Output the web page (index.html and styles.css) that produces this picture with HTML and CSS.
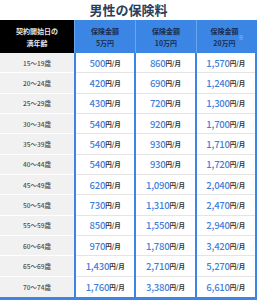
FILE: index.html
```html
<!DOCTYPE html>
<html lang="ja">
<head>
<meta charset="utf-8">
<link rel="stylesheet" href="styles.css">
</head>
<body>
<div class="page">
  <h1 class="title">男性の保険料</h1>
  <div class="table">
    <div class="head">
      <div class="hcell hleft">契約開始日の<br>満年齢</div>
      <div class="hcell">保険金額<br>5万円</div>
      <div class="hcell">保険金額<br>10万円</div>
      <div class="hcell">保険金額<br>20万円<sup class="note">※</sup></div>
    </div>
    <div class="body">
      <div class="row"><div class="age">15～19歳</div><div class="amt"><b>500</b>円/月</div><div class="amt"><b>860</b>円/月</div><div class="amt"><b>1,570</b>円/月</div></div>
      <div class="row"><div class="age">20～24歳</div><div class="amt"><b>420</b>円/月</div><div class="amt"><b>690</b>円/月</div><div class="amt"><b>1,240</b>円/月</div></div>
      <div class="row"><div class="age">25～29歳</div><div class="amt"><b>430</b>円/月</div><div class="amt"><b>720</b>円/月</div><div class="amt"><b>1,300</b>円/月</div></div>
      <div class="row"><div class="age">30～34歳</div><div class="amt"><b>540</b>円/月</div><div class="amt"><b>920</b>円/月</div><div class="amt"><b>1,700</b>円/月</div></div>
      <div class="row"><div class="age">35～39歳</div><div class="amt"><b>540</b>円/月</div><div class="amt"><b>930</b>円/月</div><div class="amt"><b>1,710</b>円/月</div></div>
      <div class="row"><div class="age">40～44歳</div><div class="amt"><b>540</b>円/月</div><div class="amt"><b>930</b>円/月</div><div class="amt"><b>1,720</b>円/月</div></div>
      <div class="row"><div class="age">45～49歳</div><div class="amt"><b>620</b>円/月</div><div class="amt"><b>1,090</b>円/月</div><div class="amt"><b>2,040</b>円/月</div></div>
      <div class="row"><div class="age">50～54歳</div><div class="amt"><b>730</b>円/月</div><div class="amt"><b>1,310</b>円/月</div><div class="amt"><b>2,470</b>円/月</div></div>
      <div class="row"><div class="age">55～59歳</div><div class="amt"><b>850</b>円/月</div><div class="amt"><b>1,550</b>円/月</div><div class="amt"><b>2,940</b>円/月</div></div>
      <div class="row"><div class="age">60～64歳</div><div class="amt"><b>970</b>円/月</div><div class="amt"><b>1,780</b>円/月</div><div class="amt"><b>3,420</b>円/月</div></div>
      <div class="row"><div class="age">65～69歳</div><div class="amt"><b>1,430</b>円/月</div><div class="amt"><b>2,710</b>円/月</div><div class="amt"><b>5,270</b>円/月</div></div>
      <div class="row last"><div class="age">70～74歳</div><div class="amt"><b>1,760</b>円/月</div><div class="amt"><b>3,380</b>円/月</div><div class="amt"><b>6,610</b>円/月</div></div>
    </div>
  </div>
</div>
</body>
</html>
```

FILE: styles.css
```css
* { box-sizing: border-box; }
html, body { margin: 0; padding: 0; background: #fff; }
body {
  font-family: "Noto Sans CJK JP", "Noto Sans", sans-serif;
  width: 257px;
  height: 300px;
  overflow: hidden;
}
.page { width: 257px; }
.title {
  margin: 0;
  height: 20px;
  line-height: 20px;
  text-align: center;
  font-size: 13px;
  font-weight: 700;
  color: #2b3e5a;
}
.head {
  display: grid;
  grid-template-columns: 74px 1fr 1fr 1fr;
  height: 33px;
  background: #3b86e4;
}
.hcell {
  display: flex;
  align-items: center;
  justify-content: center;
  text-align: center;
  font-size: 7px;
  line-height: 12px;
  font-weight: 700;
  color: #1b2d4f;
  border-left: 1px solid #6aa6ee;
}
.hleft {
  background: #000;
  color: #e4e4e4;
  border-left: none;
}
.note {
  font-size: 5px;
  color: #b8d3f5;
  vertical-align: top;
  line-height: 8px;
}
.body {
  display: grid;
  grid-template-rows: repeat(12, 1fr);
  height: 244px;
  background: #3b86e4;
  padding-right: 2px;
  border-bottom: 3px solid #3b86e4;
  height: 247px;
}
.row {
  display: grid;
  grid-template-columns: 74px 1fr 1fr 1fr;
  column-gap: 2px;
  padding-left: 0;
}
.row .age { margin-right: 0; }
.age {
  display: flex;
  align-items: center;
  justify-content: center;
  background: #f1f1f1;
  border-bottom: 1px solid #fff;
  font-size: 6.5px;
  color: #4a4a4a;
  font-weight: 500;
}
.amt {
  display: flex;
  align-items: center;
  justify-content: center;
  background: #fff;
  border-bottom: 1px solid #e4e4e4;
  font-size: 6.5px;
  font-weight: 700;
  color: #333;
}
.last .age, .last .amt { border-bottom: none; }
.amt b {
  font-size: 9.5px;
  font-weight: 500;
  color: #3f7fdc;
  letter-spacing: -0.2px;
}
```
